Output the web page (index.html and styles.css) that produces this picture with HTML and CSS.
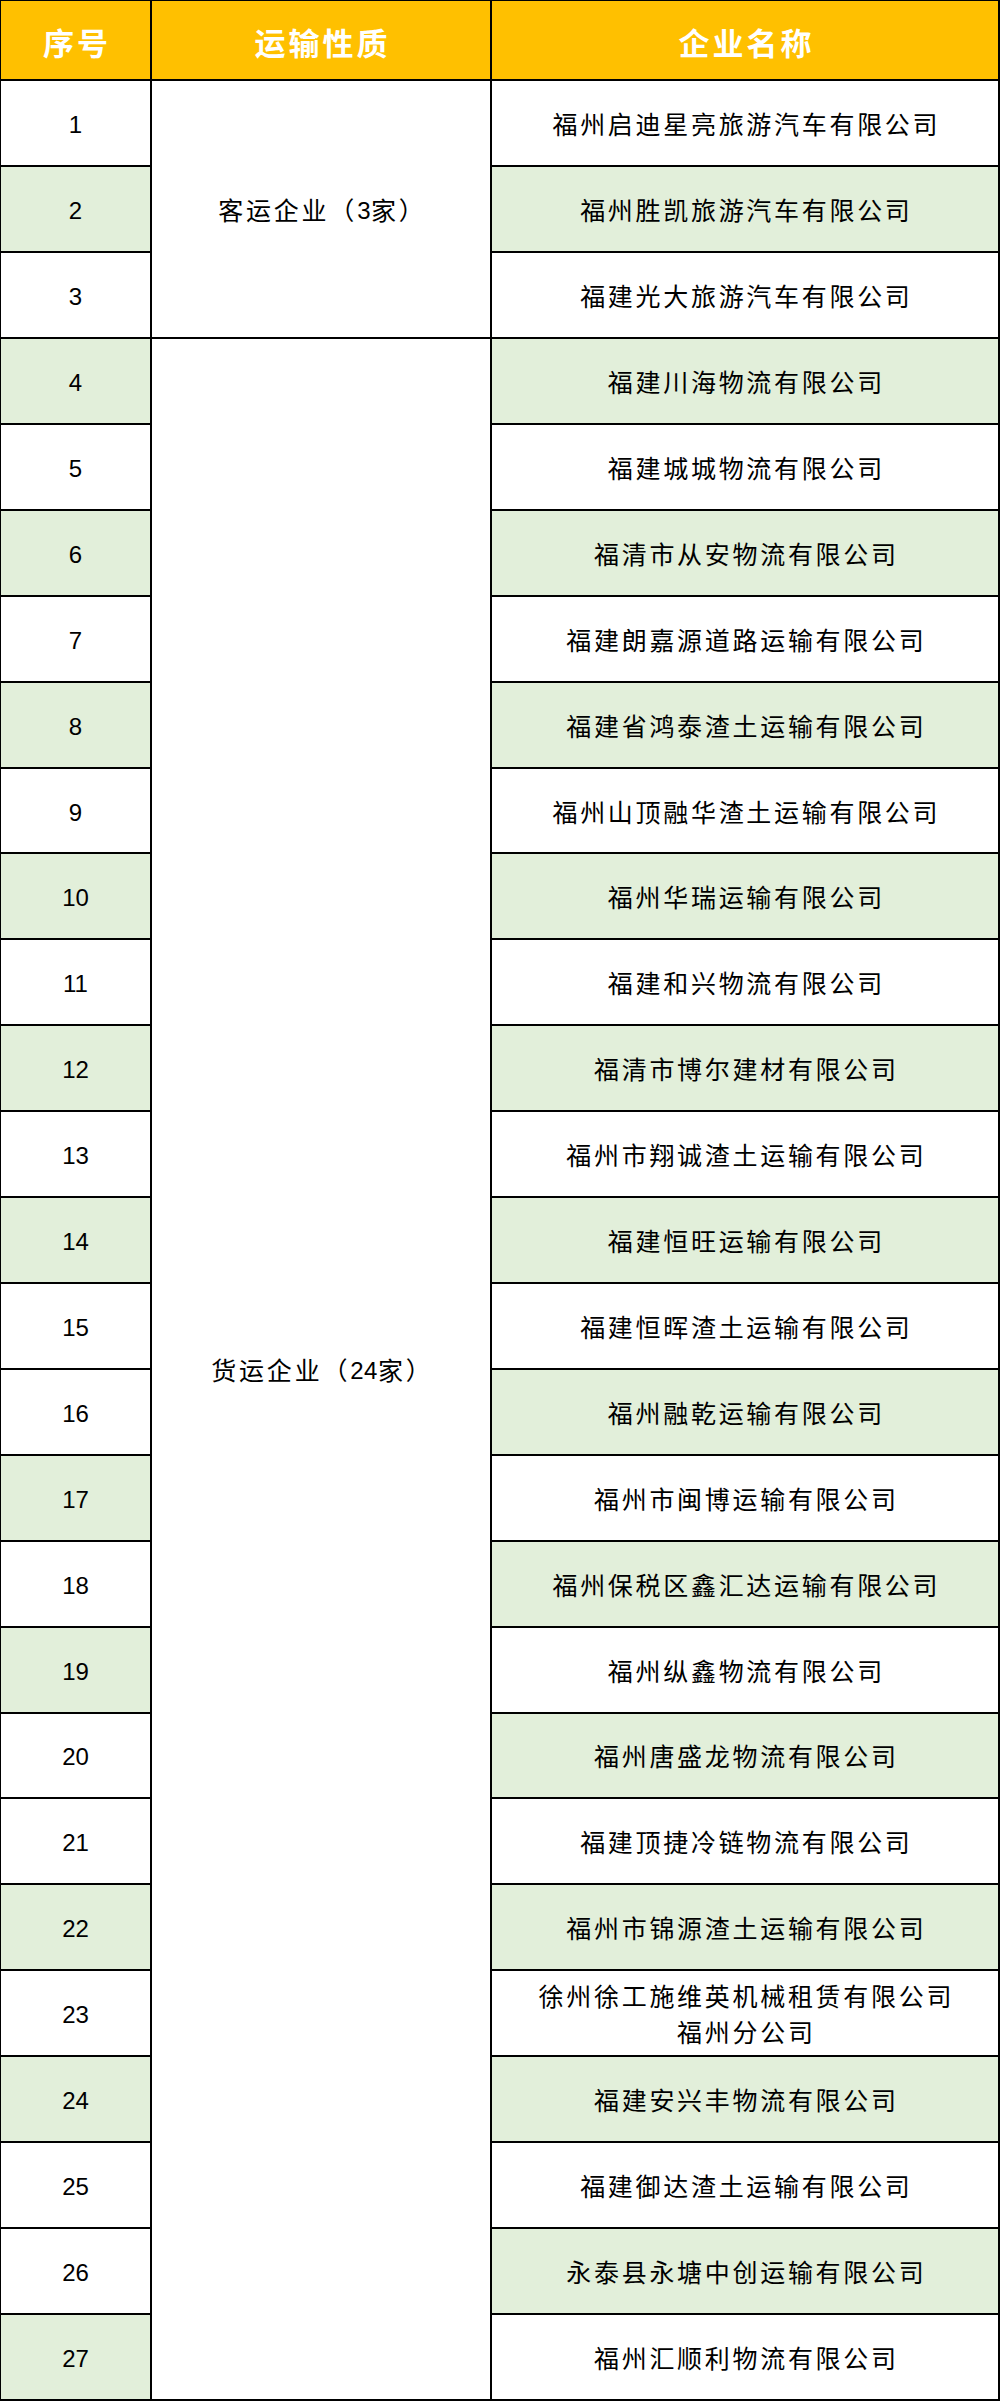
FILE: index.html
```html
<!DOCTYPE html>
<html lang="zh-CN">
<head>
<meta charset="utf-8">
<title>运输企业名单</title>
<link rel="stylesheet" href="styles.css">
</head>
<body>
<div class="table">
  <div class="cell head">序号</div>
  <div class="cell head">运输性质</div>
  <div class="cell head">企业名称</div>

  <div class="cell num">1</div>
  <div class="cell type type-passenger">客运企业（<span class="digits">3</span>家）</div>
  <div class="cell name">福州启迪星亮旅游汽车有限公司</div>

  <div class="cell num green">2</div>
  <div class="cell name green">福州胜凯旅游汽车有限公司</div>

  <div class="cell num">3</div>
  <div class="cell name">福建光大旅游汽车有限公司</div>

  <div class="cell num green">4</div>
  <div class="cell type type-freight">货运企业（<span class="digits">24</span>家）</div>
  <div class="cell name green">福建川海物流有限公司</div>

  <div class="cell num">5</div>
  <div class="cell name">福建城城物流有限公司</div>

  <div class="cell num green">6</div>
  <div class="cell name green">福清市从安物流有限公司</div>

  <div class="cell num">7</div>
  <div class="cell name">福建朗嘉源道路运输有限公司</div>

  <div class="cell num green">8</div>
  <div class="cell name green">福建省鸿泰渣土运输有限公司</div>

  <div class="cell num">9</div>
  <div class="cell name">福州山顶融华渣土运输有限公司</div>

  <div class="cell num green">10</div>
  <div class="cell name green">福州华瑞运输有限公司</div>

  <div class="cell num">11</div>
  <div class="cell name">福建和兴物流有限公司</div>

  <div class="cell num green">12</div>
  <div class="cell name green">福清市博尔建材有限公司</div>

  <div class="cell num">13</div>
  <div class="cell name">福州市翔诚渣土运输有限公司</div>

  <div class="cell num green">14</div>
  <div class="cell name green">福建恒旺运输有限公司</div>

  <div class="cell num">15</div>
  <div class="cell name">福建恒晖渣土运输有限公司</div>

  <div class="cell num">16</div>
  <div class="cell name green">福州融乾运输有限公司</div>

  <div class="cell num green">17</div>
  <div class="cell name">福州市闽博运输有限公司</div>

  <div class="cell num">18</div>
  <div class="cell name green">福州保税区鑫汇达运输有限公司</div>

  <div class="cell num green">19</div>
  <div class="cell name">福州纵鑫物流有限公司</div>

  <div class="cell num">20</div>
  <div class="cell name green">福州唐盛龙物流有限公司</div>

  <div class="cell num">21</div>
  <div class="cell name">福建顶捷冷链物流有限公司</div>

  <div class="cell num green">22</div>
  <div class="cell name green">福州市锦源渣土运输有限公司</div>

  <div class="cell num">23</div>
  <div class="cell name two-line">徐州徐工施维英机械租赁有限公司<br>福州分公司</div>

  <div class="cell num green">24</div>
  <div class="cell name green">福建安兴丰物流有限公司</div>

  <div class="cell num">25</div>
  <div class="cell name">福建御达渣土运输有限公司</div>

  <div class="cell num">26</div>
  <div class="cell name green">永泰县永塘中创运输有限公司</div>

  <div class="cell num green">27</div>
  <div class="cell name">福州汇顺利物流有限公司</div>
</div>
</body>
</html>
```

FILE: styles.css
```css
html, body {
  margin: 0;
  padding: 0;
  background: #ffffff;
}

body {
  font-family: "Liberation Sans", "Noto Sans CJK SC", sans-serif;
  color: #000000;
}

.table {
  display: grid;
  grid-template-columns: 151px 340px 508px;
  grid-template-rows: 80.3px repeat(27, 85.92px);
  width: 999px;
  border-left: 1px solid #000;
  border-top: 1px solid #000;
}

.cell {
  display: flex;
  align-items: center;
  justify-content: center;
  text-align: center;
  border-right: 2px solid #000;
  border-bottom: 2px solid #000;
  background: #ffffff;
  font-size: 24px;
  line-height: 36px;
  padding-top: 4px;
  box-sizing: border-box;
}

.head {
  background: #ffc000;
  color: #ffffff;
  font-family: "Noto Sans CJK SC", sans-serif;
  font-size: 31px;
  font-weight: 700;
  letter-spacing: 3px;
  padding-left: 3px;
  padding-top: 4px;
}

.num {
  grid-column: 1;
}

.type {
  grid-column: 2;
  font-size: 25px;
  letter-spacing: 2.8px;
  padding-left: 2.8px;
}

.digits {
  letter-spacing: 0.5px;
  font-size: 24px;
}

.type-passenger {
  grid-row: 2 / span 3;
}

.type-freight {
  grid-row: 5 / span 24;
}

.name {
  grid-column: 3;
  font-size: 25px;
  letter-spacing: 2.7px;
  padding-left: 2.7px;
}

.green {
  background: #e2efda;
}
```
